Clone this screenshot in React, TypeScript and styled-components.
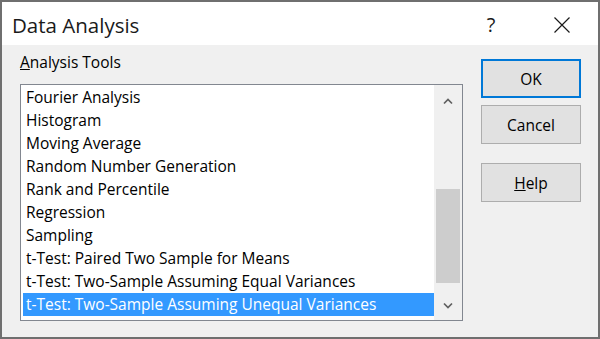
import React from 'react';
import styled, { createGlobalStyle } from 'styled-components';

const GlobalStyle = createGlobalStyle`
  html, body {
    margin: 0;
    padding: 0;
    background: #ffffff;
  }
  body {
    font-family: 'Open Sans', 'Noto Sans', sans-serif;
  }
`;

const Dialog = styled.div`
  width: 600px;
  height: 339px;
  box-sizing: border-box;
  border: 2px solid #6f6f6f;
  display: flex;
  flex-direction: column;
  background: #f0f0f0;
`;

const TitleBar = styled.div`
  height: 41px;
  background: #ffffff;
  display: flex;
  align-items: center;
  padding: 2px 13px 0 10px;
`;

const Title = styled.div`
  font-size: 20.5px;
  color: #1a1a1a;
  flex: 1;
`;

const TitleButton = styled.div`
  width: 46px;
  height: 32px;
  display: flex;
  align-items: center;
  justify-content: center;
  font-size: 20px;
  color: #1a1a1a;
  & + & {
    margin-left: 25px;
  }
`;

const Body = styled.div`
  flex: 1;
  display: flex;
  align-items: flex-start;
  padding-left: 18px;
`;

const LeftColumn = styled.div`
  padding-top: 7px;
  display: flex;
  flex-direction: column;
`;

const Label = styled.div`
  font-size: 15.5px;
  line-height: 20px;
  color: #000;
  margin-bottom: 12px;
`;

const ListBox = styled.div`
  width: 443px;
  height: 237px;
  box-sizing: border-box;
  border: 1px solid #828790;
  background: #ffffff;
  display: flex;
`;

const Items = styled.div`
  flex: 1;
  padding-top: 1px;
  overflow: hidden;
`;

const Item = styled.div<{ $selected?: boolean }>`
  margin-left: 2px;
  height: 23px;
  line-height: 23px;
  padding-left: 3px;
  font-size: 15.5px;
  white-space: nowrap;
  color: ${(p) => (p.$selected ? '#ffffff' : '#000000')};
  background: ${(p) => (p.$selected ? '#3399ff' : 'transparent')};
`;

const ScrollBar = styled.div`
  width: 28px;
  background: #f0f0f0;
  display: flex;
  flex-direction: column;
`;

const ArrowButton = styled.div<{ $h: number }>`
  height: ${(p) => p.$h}px;
  display: flex;
  align-items: center;
  justify-content: center;
`;

const Track = styled.div`
  flex: 1;
`;

const Thumb = styled.div<{ $top: number; $h: number }>`
  margin: ${(p) => p.$top}px 2px 0;
  height: ${(p) => p.$h}px;
  background: #cdcdcd;
`;

const RightColumn = styled.div`
  margin-left: 18px;
  padding-top: 14px;
  display: flex;
  flex-direction: column;
`;

const Button = styled.div<{ $default?: boolean; $gap?: number }>`
  width: 100px;
  height: 39px;
  box-sizing: border-box;
  margin-bottom: ${(p) => p.$gap ?? 0}px;
  border: ${(p) => (p.$default ? '2px solid #0078d7' : '1px solid #adadad')};
  background: #e1e1e1;
  display: flex;
  align-items: center;
  justify-content: center;
  font-size: 15.5px;
  color: #000;
`;

const Chevron = ({ down }: { down?: boolean }) => (
  <svg width="10" height="7" viewBox="0 0 10 7">
    <polyline
      points={down ? '1,1.5 5,5.5 9,1.5' : '1,5.5 5,1.5 9,5.5'}
      fill="none"
      stroke="#606060"
      strokeWidth="1.7"
    />
  </svg>
);

const CloseIcon = () => (
  <svg width="16" height="16" viewBox="0 0 16 16">
    <path d="M0.5 0.5 L15.5 15.5 M15.5 0.5 L0.5 15.5" stroke="#1a1a1a" strokeWidth="1.2" />
  </svg>
);

const tools = [
  'Fourier Analysis',
  'Histogram',
  'Moving Average',
  'Random Number Generation',
  'Rank and Percentile',
  'Regression',
  'Sampling',
  't-Test: Paired Two Sample for Means',
  't-Test: Two-Sample Assuming Equal Variances',
  't-Test: Two-Sample Assuming Unequal Variances',
];

function App() {
  const selected = tools.length - 1;

  return (
    <>
      <GlobalStyle />
      <Dialog>
        <TitleBar>
          <Title>Data Analysis</Title>
          <TitleButton>?</TitleButton>
          <TitleButton>
            <CloseIcon />
          </TitleButton>
        </TitleBar>
        <Body>
          <LeftColumn>
            <Label>
              <u>A</u>nalysis Tools
            </Label>
            <ListBox>
              <Items>
                {tools.map((t, i) => (
                  <Item key={t} $selected={i === selected}>
                    {t}
                  </Item>
                ))}
              </Items>
              <ScrollBar>
                <ArrowButton $h={33}>
                  <Chevron />
                </ArrowButton>
                <Track>
                  <Thumb $top={71} $h={94} />
                </Track>
                <ArrowButton $h={29}>
                  <Chevron down />
                </ArrowButton>
              </ScrollBar>
            </ListBox>
          </LeftColumn>
          <RightColumn>
            <Button $default $gap={7}>OK</Button>
            <Button $gap={19}>Cancel</Button>
            <Button>
              <span>
                <u>H</u>elp
              </span>
            </Button>
          </RightColumn>
        </Body>
      </Dialog>
    </>
  );
}

export default App;
